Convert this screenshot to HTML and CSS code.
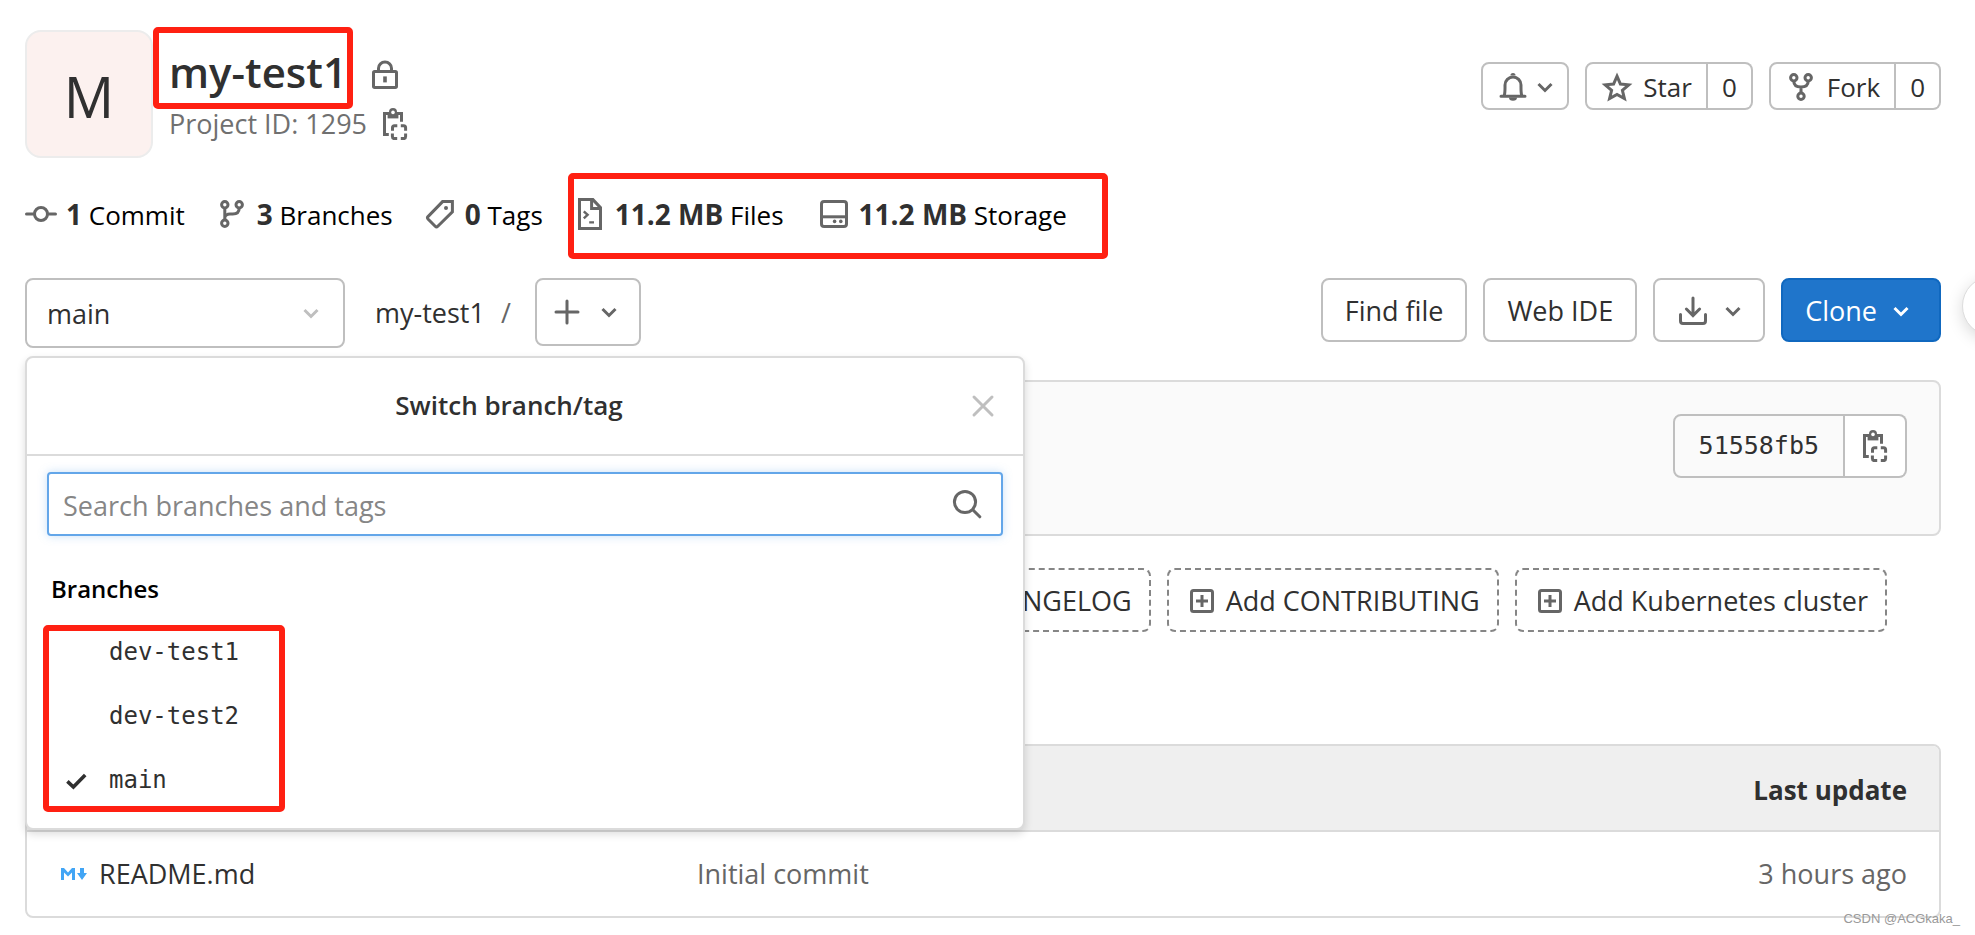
FILE: index.html
```html
<!DOCTYPE html>
<html lang="en">
<head>
<meta charset="utf-8">
<title>my-test1</title>
<link rel="stylesheet" href="styles.css">
</head>
<body>
<svg class="sprite" aria-hidden="true">
  <symbol id="chevron" viewBox="0 0 16 16"><path d="M4.75 6.5 8 9.75l3.25-3.25"/></symbol>
  <symbol id="clipboard" viewBox="0 0 16 16"><path d="M4.900 13.200H2.750V2.800h8.500V6.900"/><path d="M4.300 2.200h5.400v3H4.300z" class="fill"/><circle cx="7" cy="2" r="2" class="fill"/><circle cx="7" cy="2.200" r=".9" class="paper"/><path d="M6.750 11.400V9.900c0-.6.400-1 1-1h1.400M10.900 8.900h1.400c.6 0 1 .4 1 1v1.500M13.300 12.800v1.500c0 .6-.4 1-1 1h-1.400M9.100 15.300H7.700c-.6 0-1-.4-1-1v-1.500"/></symbol>
</svg>
<main class="page">
  <header class="project">
    <div class="avatar">M</div>
    <div class="identity">
      <div class="title-row">
        <h1 class="title">my-test1<span class="mark mark-title"></span></h1>
        <svg class="icon" viewBox="0 0 16 16"><rect x="2.25" y="6.25" width="11.5" height="8" rx=".6"/><path d="M4.75 6V4.6a3.25 3.1 0 0 1 6.5 0V6"/><path class="fill" d="M7.1 8.7h1.8v3H7.1z"/></svg>
      </div>
      <div class="id-row">
        <span>Project ID: 1295</span>
        <button class="bare" aria-label="Copy project ID"><svg class="icon"><use href="#clipboard"/></svg></button>
      </div>
    </div>
    <div class="actions">
      <button class="btn slim bell" aria-label="Notifications">
        <svg class="icon" viewBox="0 0 16 16"><path d="M3.600 12.200c.5-1.200.4-3 .4-5.200a4 4 0 0 1 8 0c0 2.200-.1 4 .4 5.200M2 12.600h12" stroke-linecap="round"/><path class="fill" d="M6.700 2.300a1.300 1.300 0 0 1 2.600 0zM6 13.300h4a2 1.600 0 0 1-4 0z"/></svg>
        <svg class="icon"><use href="#chevron"/></svg>
      </button>
      <div class="split">
        <button class="btn slim"><svg class="icon" viewBox="0 0 16 16"><path d="m8 2.600 1.700 3.900 4.200.4-3.200 2.800 1 4.100L8 11.700l-3.700 2.100 1-4.100-3.200-2.800 4.200-.4z"/></svg>Star</button>
        <a class="btn slim count" href="#stars">0</a>
      </div>
      <div class="split">
        <button class="btn slim"><svg class="icon" viewBox="0 0 16 16"><circle cx="4.400" cy="3.400" r="1.600"/><circle cx="11.600" cy="3.400" r="1.600"/><circle cx="8" cy="12.600" r="1.600"/><path d="M4.400 5c0 2 1 3 3.600 3s3.600-1 3.600-3M8 8v3"/></svg>Fork</button>
        <a class="btn slim count" href="#forks">0</a>
      </div>
    </div>
  </header>

  <nav class="stats">
    <a href="#commits"><svg class="icon" viewBox="0 0 16 16"><circle cx="8" cy="8" r="3.250"/><path d="M.75 8h4M11.250 8h4" stroke-linecap="round"/></svg><span><b>1</b> Commit</span></a>
    <a href="#branches"><svg class="icon" viewBox="0 0 16 16"><circle cx="4.400" cy="3.400" r="1.600"/><circle cx="11.600" cy="3.400" r="1.600"/><circle cx="4.400" cy="12.600" r="1.600"/><path d="M4.400 5v6M11.600 5c0 2.300-1.200 3-3.200 3H7c-1.500 0-2.600.8-2.600 2"/></svg><span><b>3</b> Branches</span></a>
    <a href="#tags"><svg class="icon" viewBox="0 0 16 16"><path d="M14.200 1.800H9.300L2 9.300a.9.900 0 0 0 0 1.200l3.600 3.600c.4.400.9.400 1.300 0l7.300-7.200z"/><circle class="fill" cx="11" cy="5" r="1"/></svg><span><b>0</b> Tags</span></a>
    <div class="sizes">
      <a href="#files"><svg class="icon" viewBox="0 0 16 16"><path d="M2.750.8h6.700l3.800 4v10.450H2.750zM8.800 1v4.300H13"/><path d="m4.900 6.700 1.900 1.700-1.900 1.800M7.600 12.200h2.400" class="thin"/></svg><span><b>11.2 MB</b> Files</span></a>
      <a href="#storage"><svg class="icon" viewBox="0 0 16 16"><rect x="1.750" y="1.750" width="12.500" height="12.500" rx="1.300"/><path d="M2 9.400h12"/><circle class="fill" cx="8.300" cy="11.700" r=".9"/><circle class="fill" cx="11.400" cy="11.700" r=".9"/></svg><span><b>11.2 MB</b> Storage</span></a>
      <span class="mark mark-sizes"></span>
    </div>
  </nav>

  <div class="toolbar">
    <div class="branch-picker">
      <select class="branch-select" aria-label="Branch"><option>main</option></select>
      <svg class="icon pale"><use href="#chevron"/></svg>
      <section class="panel" role="dialog" aria-labelledby="panel-title">
        <header class="panel-head">
          <h2 id="panel-title">Switch branch/tag</h2>
          <button class="bare close" aria-label="Close"><svg class="icon pale" viewBox="0 0 16 16"><path d="m3.500 3.500 9 9M12.500 3.500l-9 9" stroke-linecap="round"/></svg></button>
        </header>
        <div class="search">
          <input type="text" aria-label="Search branches and tags" placeholder="Search branches and tags">
          <svg class="icon" viewBox="0 0 16 16"><circle cx="7" cy="7" r="5.300"/><path d="m11 11 3.400 3.400" stroke-linecap="round"/></svg>
        </div>
        <h3>Branches</h3>
        <ul class="branches">
          <li><button>dev-test1</button></li>
          <li><button>dev-test2</button></li>
          <li><button><svg class="icon check" viewBox="0 0 16 16"><path d="m3.700 8.700 3 2.800 5.900-6"/></svg>main</button></li>
          <li class="mark mark-branches" aria-hidden="true"></li>
        </ul>
      </section>
    </div>
    <div class="crumbs"><a href="#root">my-test1</a><span>/</span></div>
    <button class="btn add" aria-label="Add to tree"><svg class="icon" viewBox="0 0 16 16"><path d="M8 2.500v11M2.500 8h11" stroke-linecap="round"/></svg><svg class="icon"><use href="#chevron"/></svg></button>
    <div class="tools">
      <a class="btn" href="#find">Find file</a>
      <button class="btn">Web IDE</button>
      <button class="btn download" aria-label="Download"><svg class="icon" viewBox="0 0 16 16"><path d="M8 1.500v8.500M4.700 7 8 10.300 11.300 7M1.750 9.800v3.200c0 .7.500 1.250 1.250 1.250h10c.7 0 1.250-.5 1.250-1.250V9.800" stroke-linecap="round"/></svg><svg class="icon"><use href="#chevron"/></svg></button>
      <button class="btn primary">Clone<svg class="icon"><use href="#chevron"/></svg></button>
    </div>
  </div>

  <section class="commit">
    <div class="split">
      <span class="btn sha">51558fb5</span>
      <button class="btn copy" aria-label="Copy commit SHA"><svg class="icon"><use href="#clipboard"/></svg></button>
    </div>
  </section>

  <div class="suggestions">
    <a class="btn dashed" href="#changelog"><svg class="icon" viewBox="0 0 16 16"><rect x="2.750" y="2.750" width="10.500" height="10.500" rx="1"/><path d="M8 5v6M5 8h6"/></svg>Add CHANGELOG</a>
    <a class="btn dashed" href="#contributing"><svg class="icon" viewBox="0 0 16 16"><rect x="2.750" y="2.750" width="10.500" height="10.500" rx="1"/><path d="M8 5v6M5 8h6"/></svg>Add CONTRIBUTING</a>
    <a class="btn dashed" href="#cluster"><svg class="icon" viewBox="0 0 16 16"><rect x="2.750" y="2.750" width="10.500" height="10.500" rx="1"/><path d="M8 5v6M5 8h6"/></svg>Add Kubernetes cluster</a>
  </div>

  <table class="files">
    <thead><tr><th></th><th></th><th>Last update</th></tr></thead>
    <tbody><tr>
      <td><a class="file" href="#readme"><svg class="md" viewBox="0 0 26 12"><path d="M0 12V0h3l4 4.500L11 0h3v12h-3V4.500L7 8.500l-4-4V12zM19 0h4v5h3l-5 7-5-7h3z"/></svg>README.md</a></td>
      <td><a href="#initial">Initial commit</a></td>
      <td>3 hours ago</td>
    </tr></tbody>
  </table>
</main>
<button class="floating" aria-label="Assistant"></button>
<div class="watermark">CSDN @ACGkaka_</div>
</body>
</html>
```

FILE: styles.css
```css
* { box-sizing: border-box; }

body {
  margin: 0;
  position: relative;
  min-height: 100vh;
  overflow: hidden;
  background: #fff;
  color: #303030;
  font: 27px/36px "Open Sans", "Noto Sans", sans-serif;
}

a { color: inherit; text-decoration: none; }
button, input, select { font: inherit; color: inherit; }
h1, h2, h3, ul { margin: 0; padding: 0; }

.sprite { position: absolute; width: 0; height: 0; }

.icon {
  flex: none;
  width: 32px;
  height: 32px;
  fill: none;
  stroke: #666;
  stroke-width: 1.5;
  color: #666;
}
.icon .fill, .fill { fill: #666; stroke: none; }
.thin { stroke-width: 1.2; }
.paper { fill: #fff; stroke: none; }
.pale { stroke: #bfbfbf; }

.page { padding: 30px 34px 0 25px; }

/* Highlight frames drawn over the page */
.mark {
  position: absolute;
  border: 6px solid #ff2012;
  border-radius: 5px;
  pointer-events: none;
}
.mark-title { inset: -9px -6px -5px -16px; }
.mark-sizes { inset: -21px -41px -25px -6px; }
.mark-branches { top: -3px; left: 16px; width: 242px; height: 187px; }

/* Project header */
.project { display: flex; align-items: flex-start; gap: 16px; }
.avatar {
  width: 128px;
  height: 128px;
  display: flex;
  align-items: center;
  justify-content: center;
  border: 2px solid #ececec;
  border-radius: 16px;
  background: #fcf1ef;
  font-size: 56px;
  padding-top: 4px;
}
.identity { padding-top: 6px; }
.title-row { display: flex; align-items: center; gap: 22px; }
.title {
  position: relative;
  padding-top: 4px;
  font-size: 42px;
  line-height: 64px;
  font-weight: 600;
}
.title-row .icon { margin-top: 10px; }
.id-row { display: flex; align-items: center; gap: 12px; color: #707070; line-height: 40px; }
.bare { display: flex; padding: 0; border: 0; background: none; }

.actions { margin: 32px 0 0 auto; display: flex; gap: 16px; }
.btn {
  display: inline-flex;
  align-items: center;
  justify-content: center;
  gap: 8px;
  height: 64px;
  padding: 2px 22px 0;
  border: 2px solid #bfbfbf;
  border-radius: 8px;
  background: #fff;
  white-space: nowrap;
}
.slim { height: 48px; padding: 2px 14px 0; gap: 10px; font-size: 26px; }
.bell { gap: 0; padding: 2px 6px 0 14px; }
.split { display: flex; }
.split > :first-child { border-radius: 8px 0 0 8px; }
.split > :last-child { border-radius: 0 8px 8px 0; border-left: 0; }

/* Statistics */
.stats { display: flex; gap: 31px; margin-top: 36px; font-size: 26px; line-height: 40px; color: #000; }
.stats a { display: flex; align-items: center; gap: 9px; height: 40px; }
.stats b { color: #303030; font-size: 28px; }
.sizes { position: relative; display: flex; gap: 34px; }

/* Toolbar */
.toolbar { display: flex; align-items: flex-start; margin-top: 44px; }
.branch-picker { position: relative; display: grid; width: 320px; align-items: center; }
.branch-select {
  grid-area: 1 / 1;
  height: 70px;
  padding: 2px 20px 0;
  border: 2px solid #bfbfbf;
  border-radius: 8px;
  background: #fff;
  appearance: none;
}
.branch-picker > .icon { grid-area: 1 / 1; justify-self: end; margin-right: 18px; pointer-events: none; }
.crumbs { display: flex; gap: 16px; margin-left: 30px; line-height: 70px; }
.crumbs span { color: #666; }
.add { height: 68px; margin-left: 24px; padding: 0 14px; gap: 10px; }
.tools { display: flex; gap: 16px; margin-left: auto; }
.download { padding: 2px 14px 0 22px; }
.primary { border-color: #1068bf; background: #1f75cb; color: #fff; }
.primary .icon { stroke: #fff; }

/* Branch switcher */
.panel {
  position: absolute;
  z-index: 2;
  top: 78px;
  left: 0;
  width: 1000px;
  padding-bottom: 8px;
  border: 2px solid #dbdbdb;
  border-radius: 8px;
  background: #fff;
  box-shadow: 0 4px 8px rgba(0, 0, 0, .14);
}
.panel-head {
  position: relative;
  display: flex;
  align-items: center;
  justify-content: center;
  height: 98px;
  border-bottom: 2px solid #dbdbdb;
}
.panel h2 { padding: 0 32px 2px 0; font-size: 26px; font-weight: 600; }
.close { position: absolute; right: 24px; }
.search { display: grid; align-items: center; margin: 16px 20px 0; }
.search input {
  grid-area: 1 / 1;
  width: 100%;
  height: 64px;
  padding: 2px 14px 0;
  border: 2px solid #63a6e9;
  border-radius: 4px;
  outline: none;
  background: #fff;
  box-shadow: 0 0 10px rgba(99, 166, 233, .35);
}
.search input::placeholder { color: #868686; opacity: 1; }
.search .icon { grid-area: 1 / 1; justify-self: end; margin-right: 20px; }
.panel h3 { margin: 35px 0 0 24px; color: #000; font-size: 24px; font-weight: 600; }
.branches { position: relative; margin-top: 21px; list-style: none; }
.branches button {
  display: flex;
  align-items: center;
  width: 100%;
  height: 64px;
  padding: 0 0 16px 82px;
  border: 0;
  background: none;
  font: 24px/36px "DejaVu Sans Mono", monospace;
}
.branches li:nth-child(3) button { padding-left: 33px; gap: 17px; }
.check { stroke: #303030; stroke-width: 1.8; }

/* Last commit */
.commit {
  display: flex;
  justify-content: flex-end;
  height: 156px;
  margin-top: 32px;
  padding: 32px;
  border: 2px solid #dbdbdb;
  border-radius: 8px;
  background: #fafafa;
}
.sha { padding: 0 24px; background: #fafafa; font: 25px/36px "DejaVu Sans Mono", monospace; }
.copy { padding: 0 14px; }

.suggestions { display: flex; justify-content: flex-end; gap: 16px; margin: 32px 54px 0 0; }
.dashed { border: 2px dashed #868686; padding: 2px 17px 0; }

/* File list */
.files {
  width: 100%;
  margin-top: 112px;
  border: 2px solid #dbdbdb;
  border-radius: 8px;
  border-spacing: 0;
  table-layout: fixed;
  overflow: hidden;
}
.files th { height: 86px; padding: 4px 32px 0; border-bottom: 2px solid #dbdbdb; background: #efefef; font-size: 26px; font-weight: 700; }
.files td { height: 84px; padding: 0 32px; color: #666; }
.files td:first-child { padding-left: 34px; }
.files :is(th, td):first-child { width: 638px; }
.files :is(th, td):last-child { width: 260px; text-align: right; }
.file { display: flex; align-items: center; gap: 12px; color: #303030; }
.md { width: 26px; height: 12px; fill: #42a5f5; }

.floating {
  position: absolute;
  top: 276px;
  right: -47px;
  width: 60px;
  height: 60px;
  border: 1px solid #ddd;
  border-radius: 50%;
  background: #fff;
  box-shadow: 0 4px 16px rgba(0, 0, 0, .15);
}
.watermark {
  position: absolute;
  right: 15px;
  bottom: 7px;
  color: #999;
  font: 13px/18px "Liberation Sans", sans-serif;
}
```
